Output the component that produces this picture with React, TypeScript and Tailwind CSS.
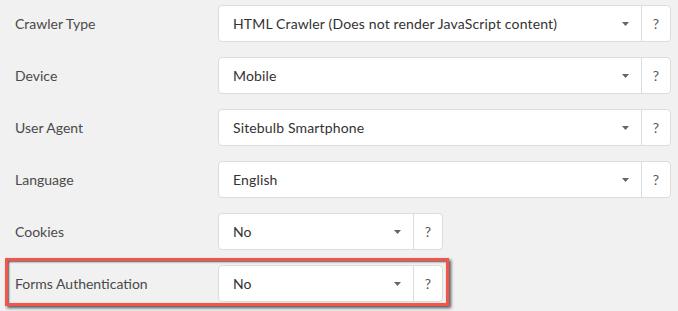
import React from 'react';

interface Field {
  label: string;
  value: string;
  wide: boolean;
}

const FIELDS: Field[] = [
  { label: 'Crawler Type', value: 'HTML Crawler (Does not render JavaScript content)', wide: true },
  { label: 'Device', value: 'Mobile', wide: true },
  { label: 'User Agent', value: 'Sitebulb Smartphone', wide: true },
  { label: 'Language', value: 'English', wide: true },
  { label: 'Cookies', value: 'No', wide: false },
];

const Caret = () => (
  <svg width="7" height="4" viewBox="0 0 7 4" className="shrink-0">
    <path d="M0 0 L7 0 L3.5 4 Z" fill="#666" />
  </svg>
);

const SelectBox = ({ value, wide }: { value: string; wide: boolean }) => (
  <div
    className={`flex h-[37px] bg-white border border-[#dcdcdc] rounded-[4px] ${wide ? 'w-[453px]' : 'w-[225px]'}`}
  >
    <div className="flex flex-1 items-center justify-between pl-[14px] pr-[12px]">
      <span className="text-[14px] tracking-[0.15px] text-[#333]">{value}</span>
      <Caret />
    </div>
    <div className="flex w-[29px] items-center justify-center border-l border-[#dcdcdc] text-[14px] text-[#555]">
      ?
    </div>
  </div>
);

const Row = ({ field }: { field: Field }) => (
  <div className="flex items-center">
    <div className="w-[203px] text-[14px] text-[#4a4a4a]">{field.label}</div>
    <SelectBox value={field.value} wide={field.wide} />
  </div>
);

export default function App() {
  return (
    <div
      className="w-[678px] h-[311px] bg-[#f1f1f1] pt-[5px] overflow-hidden"
      style={{ fontFamily: 'Lato, "Open Sans", sans-serif' }}
    >
      <div className="flex flex-col gap-[15px] pl-[15px]">
        {FIELDS.map((f) => (
          <Row key={f.label} field={f} />
        ))}
      </div>
      <div className="mt-[8px] ml-[5px] w-fit border-[3px] border-[#f2564a] pl-[7px] pr-[3px] pt-[4px] pb-[1px] shadow-[2px_2px_3px_rgba(0,0,0,0.65),inset_1px_1px_2px_rgba(0,0,0,0.65)]">
        <Row field={{ label: 'Forms Authentication', value: 'No', wide: false }} />
      </div>
    </div>
  );
}
